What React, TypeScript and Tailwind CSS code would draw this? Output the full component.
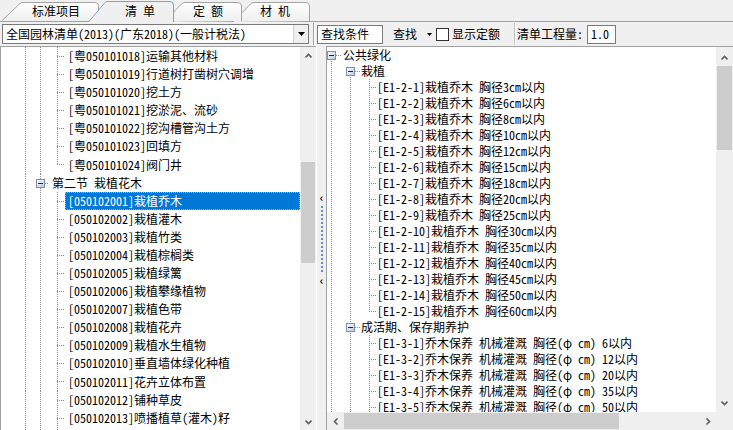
import React from "react";

const FONT = "font-['Noto_Sans_Mono_CJK_SC','Noto_Sans_CJK_SC',sans-serif]";
const DOT = "#8c8c8c";

type Dir = "up" | "down" | "left" | "right";

function Chevron({ dir }: { dir: Dir }) {
  const v = dir === "up" || dir === "down";
  const pts = {
    up: "0.5,4.5 3.5,1.5 6.5,4.5",
    down: "0.5,1.5 3.5,4.5 6.5,1.5",
    left: "4.5,0.5 1.5,3.5 4.5,6.5",
    right: "1.5,0.5 4.5,3.5 1.5,6.5",
  }[dir];
  return (
    <svg width={v ? 7 : 6} height={v ? 6 : 7} viewBox={v ? "0 0 7 6" : "0 0 6 7"}>
      <polyline points={pts} fill="none" stroke="#606060" strokeWidth="1.6" />
    </svg>
  );
}

type GuideProps = {
  w: number;
  h: number;
  full?: number[];
  lower?: number[];
  half?: number;
  hline?: [number, number];
  box?: number;
};

// tree connector lines and the expand box for one row
function Guides({ w, h, full = [], lower = [], half, hline, box }: GuideProps) {
  const mid = Math.floor(h / 2);
  const dash = { stroke: DOT, strokeDasharray: "1 1", shapeRendering: "crispEdges" as const };
  return (
    <svg width={w} height={h} className="shrink-0">
      <defs>
        <linearGradient id="bx" x1="0" y1="0" x2="1" y2="1">
          <stop offset="0" stopColor="#ffffff" />
          <stop offset="1" stopColor="#b9c6da" />
        </linearGradient>
      </defs>
      {full.map((x) => (
        <line key={"f" + x} x1={x + 0.5} y1={0} x2={x + 0.5} y2={h} {...dash} />
      ))}
      {lower.map((x) => (
        <line key={"l" + x} x1={x + 0.5} y1={mid} x2={x + 0.5} y2={h} {...dash} />
      ))}
      {half !== undefined && <line x1={half + 0.5} y1={0} x2={half + 0.5} y2={mid + 1} {...dash} />}
      {hline && <line x1={hline[0]} y1={mid + 0.5} x2={hline[1]} y2={mid + 0.5} {...dash} />}
      {box !== undefined && (
        <g shapeRendering="crispEdges">
          <rect x={box - 3.5} y={mid - 3.5} width={8} height={8} fill="url(#bx)" stroke="#7891b3" />
          <line x1={box - 2} y1={mid + 0.5} x2={box + 3} y2={mid + 0.5} stroke="#14285a" />
        </g>
      )}
    </svg>
  );
}

type LeftRow = { text: string; kind: "leaf" | "section"; last?: boolean; selected?: boolean };

const leftRows: LeftRow[] = [
  { text: "[粤050101018]运输其他材料", kind: "leaf" },
  { text: "[粤050101019]行道树打凿树穴调增", kind: "leaf" },
  { text: "[粤050101020]挖土方", kind: "leaf" },
  { text: "[粤050101021]挖淤泥、流砂", kind: "leaf" },
  { text: "[粤050101022]挖沟槽管沟土方", kind: "leaf" },
  { text: "[粤050101023]回填方", kind: "leaf" },
  { text: "[粤050101024]阀门井", kind: "leaf", last: true },
  { text: "第二节 栽植花木", kind: "section" },
  { text: "[050102001]栽植乔木", kind: "leaf", selected: true },
  { text: "[050102002]栽植灌木", kind: "leaf" },
  { text: "[050102003]栽植竹类", kind: "leaf" },
  { text: "[050102004]栽植棕榈类", kind: "leaf" },
  { text: "[050102005]栽植绿篱", kind: "leaf" },
  { text: "[050102006]栽植攀缘植物", kind: "leaf" },
  { text: "[050102007]栽植色带", kind: "leaf" },
  { text: "[050102008]栽植花卉", kind: "leaf" },
  { text: "[050102009]栽植水生植物", kind: "leaf" },
  { text: "[050102010]垂直墙体绿化种植", kind: "leaf" },
  { text: "[050102011]花卉立体布置", kind: "leaf" },
  { text: "[050102012]铺种草皮", kind: "leaf" },
  { text: "[050102013]喷播植草(灌木)籽", kind: "leaf" },
  { text: "[050102014]植草砖内植草", kind: "leaf" },
];

type RightRow = { text: string; kind: "root" | "group" | "leaf"; first?: boolean; last?: boolean };

const dia = [3, 6, 8, 10, 12, 15, 18, 20, 25, 30, 35, 40, 45, 50, 60];
const care = [6, 12, 20, 35, 50];

const rightRows: RightRow[] = [
  { text: "公共绿化", kind: "root" },
  { text: "栽植", kind: "group", first: true },
  ...dia.map((d, i) => ({
    text: `[E1-2-${i + 1}]栽植乔木 胸径${d}cm以内`,
    kind: "leaf" as const,
    last: i === dia.length - 1,
  })),
  { text: "成活期、保存期养护", kind: "group" },
  ...care.map((d, i) => ({
    text: `[E1-3-${i + 1}]乔木保养 机械灌溉 胸径(φ cm) ${d}以内`,
    kind: "leaf" as const,
  })),
];

const LEFT_PITCH = 18.08;

function LeftTree() {
  return (
    <div className="flex-1 overflow-hidden">
      {leftRows.map((r, i) => {
        const h = Math.round((i + 1) * LEFT_PITCH) - Math.round(i * LEFT_PITCH);
        return (
          <div key={i} className="flex" style={{ height: h }}>
            {r.kind === "section" ? (
              <Guides w={48} h={h} full={[24, 39]} box={39} hline={[44, 48]} />
            ) : r.last ? (
              <Guides w={64} h={h} full={[24, 39]} half={56} hline={[56, 64]} />
            ) : (
              <Guides w={64} h={h} full={[24, 39, 56]} hline={[56, 64]} />
            )}
            <div
              className={
                r.selected
                  ? "flex flex-1 items-center border border-dotted border-[#f2a33a] bg-[#0078d7] pl-[2px] text-white"
                  : "flex flex-1 items-center pl-[3px] text-black"
              }
            >
              <span className="whitespace-pre text-[12px] leading-none">{r.text}</span>
            </div>
          </div>
        );
      })}
    </div>
  );
}

function RightTree() {
  return (
    <div className="flex-1 overflow-hidden">
      {rightRows.map((r, i) => {
        let g: React.ReactNode;
        if (r.kind === "root") g = <Guides w={15} h={16} lower={[4]} box={4} hline={[9, 15]} />;
        else if (r.kind === "group")
          g = r.first ? (
            <Guides w={33} h={16} full={[4]} lower={[23]} box={23} hline={[28, 33]} />
          ) : (
            <Guides w={33} h={16} full={[4, 23]} box={23} hline={[28, 33]} />
          );
        else
          g = r.last ? (
            <Guides w={49} h={16} full={[4, 23]} half={42} hline={[42, 49]} />
          ) : (
            <Guides w={49} h={16} full={[4, 23, 42]} hline={[42, 49]} />
          );
        return (
          <div key={i} className="flex h-[16px] items-center">
            {g}
            <span className="whitespace-pre pl-[1px] text-[12px] leading-none text-black">{r.text}</span>
          </div>
        );
      })}
    </div>
  );
}

function Tabs() {
  return (
    <div className="relative h-[22px]">
      <svg width="733" height="22" className="absolute inset-0">
        <defs>
          <linearGradient id="tabg" x1="0" y1="0" x2="0" y2="1">
            <stop offset="0" stopColor="#ffffff" />
            <stop offset="1" stopColor="#eeeeee" />
          </linearGradient>
        </defs>
        <line x1="0" y1="21.5" x2="733" y2="21.5" stroke="#8aa6c9" />
        <path d="M233,22 L251,3.5 Q252,2.5 254,2.5 L306,2.5 Q309.5,2.5 309.5,6 L309.5,21" fill="url(#tabg)" stroke="#a3a3a3" />
        <path d="M164,22 L182,3.5 Q183,2.5 185,2.5 L238,2.5 Q241.5,2.5 241.5,6 L241.5,21" fill="url(#tabg)" stroke="#a3a3a3" />
        <path d="M1.5,21 L20,3.5 Q21,2.5 23,2.5 L95,2.5 Q98.5,2.5 98.5,6 L98.5,21" fill="url(#tabg)" stroke="#a3a3a3" />
        <path d="M88.5,22 L105,2.5 Q106,1.5 108,1.5 L170,1.5 Q173.5,1.5 173.5,5 L173.5,22" fill="#f0f0f0" stroke="#7fa3cd" />
        <line x1="89.5" y1="21.5" x2="173" y2="21.5" stroke="#f0f0f0" />
      </svg>
      <div className="relative flex h-full items-center pb-[1px] text-[12px] leading-none text-black">
        <span className="ml-[32px] w-[48px] whitespace-pre">标准项目</span>
        <span className="ml-[45px] flex w-[30px] justify-between">
          <span>清</span>
          <span>单</span>
        </span>
        <span className="ml-[38px] flex w-[30px] justify-between">
          <span>定</span>
          <span>额</span>
        </span>
        <span className="ml-[37px] flex w-[30px] justify-between">
          <span>材</span>
          <span>机</span>
        </span>
      </div>
    </div>
  );
}

function Toolbar() {
  return (
    <div className="flex h-[24px] items-center text-[12px] leading-none text-black">
      <div className="ml-[2px] flex h-[20px] w-[307px] items-center border border-[#7a7a7a] bg-white">
        <span className="flex-1 whitespace-pre pl-[3px]">全国园林清单(2013)(广东2018)(一般计税法)</span>
        <div className="flex h-full w-[15px] items-center justify-center border-l border-[#d0d0d0] bg-[#f0f0f0]">
          <svg width="7" height="4">
            <polygon points="0,0 7,0 3.5,4" fill="#000" />
          </svg>
        </div>
      </div>
      <div className="ml-[4px] h-[22px] w-[2px] border-l border-r border-l-[#a0a0a0] border-r-white" />
      <div className="ml-[2px] flex h-[19px] w-[66px] items-center border border-[#7a7a7a] bg-white pl-[3px]">
        查找条件
      </div>
      <span className="ml-[10px] w-[24px]">查找</span>
      <svg width="5" height="3" className="ml-[10px]">
        <polygon points="0,0 5,0 2.5,3" fill="#000" />
      </svg>
      <div className="ml-[4px] h-[13px] w-[13px] border border-[#333] bg-white" />
      <span className="ml-[3px] w-[48px]">显示定额</span>
      <div className="ml-[14px] h-[22px] w-[2px] border-l border-r border-l-[#c0c0c0] border-r-white" />
      <span className="ml-[1px] w-[66px] whitespace-pre">清单工程量:</span>
      <div className="ml-[4px] flex h-[19px] w-[29px] items-center border border-[#7a7a7a] bg-white pl-[3px]">
        1.0
      </div>
    </div>
  );
}

export default function App() {
  return (
    <div className={`flex h-[430px] w-[733px] flex-col overflow-hidden bg-[#f0f0f0] ${FONT}`}>
      <Tabs />
      <Toolbar />
      <div className="flex min-h-0 flex-1">
        {/* left: 清单 tree */}
        <div className="flex w-[316px] border-l border-t border-[#a0a0a0] bg-white">
          <LeftTree />
          <div className="flex w-[16px] flex-col bg-[#f0f0f0]">
            <div className="flex h-[17px] items-center justify-center">
              <Chevron dir="up" />
            </div>
            <div className="flex-1 px-[1px]">
              <div className="mt-[98px] h-[101px] bg-[#cdcdcd]" />
            </div>
            <div className="flex h-[17px] items-center justify-center">
              <Chevron dir="down" />
            </div>
          </div>
        </div>
        {/* splitter */}
        <div className="flex w-[10px] flex-col items-center border-l border-white pt-[148px]">
          <span className="text-[11px] font-bold leading-[7px]">‹</span>
          <div className="mt-[5px] flex flex-col gap-[2px]">
            {Array.from({ length: 17 }).map((_, i) => (
              <div key={i} className="h-[2px] w-[2px] bg-[#5d8bd6]" />
            ))}
          </div>
          <span className="mt-[5px] text-[11px] font-bold leading-[7px]">‹</span>
        </div>
        {/* right: 定额 tree */}
        <div className="flex flex-1 flex-col border-l border-t border-[#a0a0a0] bg-white">
          <div className="flex min-h-0 flex-1">
            <RightTree />
            <div className="flex w-[17px] flex-col bg-[#f0f0f0]">
              <div className="flex h-[19px] items-center justify-center pt-[2px]">
                <Chevron dir="up" />
              </div>
              <div className="flex-1 px-[1px]">
                <div className="h-[84px] bg-[#cdcdcd]" />
              </div>
              <div className="flex h-[19px] items-center justify-center">
                <Chevron dir="down" />
              </div>
            </div>
          </div>
          <div className="flex h-[18px]">
            <div className="flex flex-1 bg-[#f0f0f0]">
              <div className="flex w-[17px] items-center justify-center">
                <Chevron dir="left" />
              </div>
              <div className="flex-1 py-[1px]">
                <div className="h-full w-[275px] bg-[#cdcdcd]" />
              </div>
              <div className="flex w-[17px] items-center justify-center">
                <Chevron dir="right" />
              </div>
            </div>
            <div className="w-[17px] bg-[#f0f0f0]" />
          </div>
        </div>
      </div>
    </div>
  );
}
